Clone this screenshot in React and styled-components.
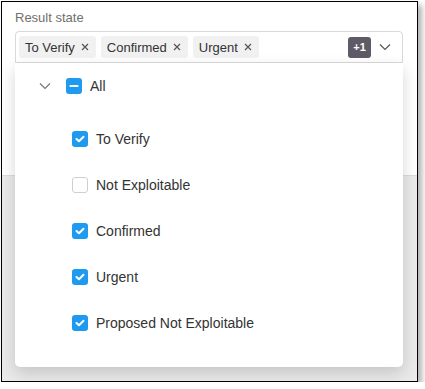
import React from 'react'
import styled, { createGlobalStyle } from 'styled-components'

const GlobalStyle = createGlobalStyle`
  html, body {
    margin: 0;
    padding: 0;
    background: #ffffff;
  }
`

const Frame = styled.div`
  position: relative;
  margin: 1px 0 0 1px;
  width: 415px;
  height: 379px;
  border: 1px solid #000;
  box-shadow: 4px 4px 6px rgba(0, 0, 0, 0.3);
  background: #eaeaea;
  overflow: hidden;
  font-family: Arial, "Liberation Sans", sans-serif;
`

const Header = styled.div`
  background: #fff;
  height: 174px;
  border-bottom: 1px solid #dcdcdc;
  padding: 8px 0 0 13px;
  box-sizing: border-box;
`

const Label = styled.div`
  font-size: 13px;
  color: #6f6f6f;
  line-height: 15px;
  margin-bottom: 6px;
`

const SelectWrap = styled.div`
  position: relative;
  width: 388px;
`

const SelectBox = styled.div`
  height: 32px;
  box-sizing: border-box;
  border: 1px solid #d9d9d9;
  border-radius: 4px 4px 0 0;
  display: flex;
  align-items: center;
  padding: 0 11px 0 3px;
  gap: 5px;
`

const Tag = styled.span`
  display: inline-flex;
  align-items: center;
  gap: 6px;
  height: 22px;
  padding: 0 7px 0 6px;
  background: #f1f1f1;
  border-radius: 3px;
  font-size: 13px;
  color: #333;
`

const Spacer = styled.div`
  flex: 1;
`

const Badge = styled.span`
  width: 23px;
  height: 21px;
  border-radius: 3px;
  background: #5f5b66;
  color: #fff;
  font-size: 11px;
  font-weight: bold;
  display: flex;
  align-items: center;
  justify-content: center;
  margin-right: 3px;
`

const Menu = styled.div`
  position: absolute;
  top: 32px;
  left: 0;
  width: 388px;
  height: 304px;
  background: #fff;
  border-radius: 0 0 5px 5px;
  box-shadow: 0 6px 16px rgba(0, 0, 0, 0.16);
  box-sizing: border-box;
`

const Row = styled.div`
  display: flex;
  align-items: center;
  height: ${p => (p.$root ? '45px' : '46px')};
  padding-left: ${p => (p.$root ? '24px' : '57px')};
  margin-bottom: ${p => (p.$root ? '8px' : '0')};
  font-size: 14px;
  color: #333;
`

const Box = styled.span`
  width: 16px;
  height: 16px;
  box-sizing: border-box;
  border-radius: 3px;
  margin-right: 8px;
  display: flex;
  align-items: center;
  justify-content: center;
  background: ${p => (p.$on ? '#1e9bf0' : '#fff')};
  border: ${p => (p.$on ? 'none' : '1px solid #cfcfcf')};
`

const Caret = styled.span`
  display: flex;
  width: 12px;
  margin-right: 15px;
`

const Chevron = ({ color = '#666' }) => (
  <svg width="12" height="8" viewBox="0 0 12 8">
    <path d="M1 1.5 L6 6.5 L11 1.5" fill="none" stroke={color} strokeWidth="1.2" />
  </svg>
)

const Close = () => (
  <svg width="8" height="8" viewBox="0 0 8 8">
    <path d="M1 1 L7 7 M7 1 L1 7" stroke="#555" strokeWidth="1.2" />
  </svg>
)

const Check = () => (
  <svg width="10" height="8" viewBox="0 0 10 8">
    <path d="M1.5 4 L4 6.3 L8.5 1.7" fill="none" stroke="#fff" strokeWidth="2" strokeLinecap="round" strokeLinejoin="round" />
  </svg>
)

const Dash = () => (
  <svg width="10" height="4" viewBox="0 0 10 4">
    <path d="M1.5 2 H8.5" stroke="#fff" strokeWidth="2.2" strokeLinecap="round" />
  </svg>
)

const items = [
  { label: 'To Verify', on: true },
  { label: 'Not Exploitable', on: false },
  { label: 'Confirmed', on: true },
  { label: 'Urgent', on: true },
  { label: 'Proposed Not Exploitable', on: true },
]

const App = () => {
  return (
    <>
      <GlobalStyle />
      <Frame>
        <Header>
          <Label>Result state</Label>
          <SelectWrap>
            <SelectBox>
              <Tag>To Verify <Close /></Tag>
              <Tag>Confirmed <Close /></Tag>
              <Tag>Urgent <Close /></Tag>
              <Spacer />
              <Badge>+1</Badge>
              <Chevron color="#555" />
            </SelectBox>
            <Menu>
              <Row $root>
                <Caret><Chevron color="#777" /></Caret>
                <Box $on><Dash /></Box>
                All
              </Row>
              {items.map(it => (
                <Row key={it.label}>
                  <Box $on={it.on}>{it.on && <Check />}</Box>
                  {it.label}
                </Row>
              ))}
            </Menu>
          </SelectWrap>
        </Header>
      </Frame>
    </>
  )
}

export default App
